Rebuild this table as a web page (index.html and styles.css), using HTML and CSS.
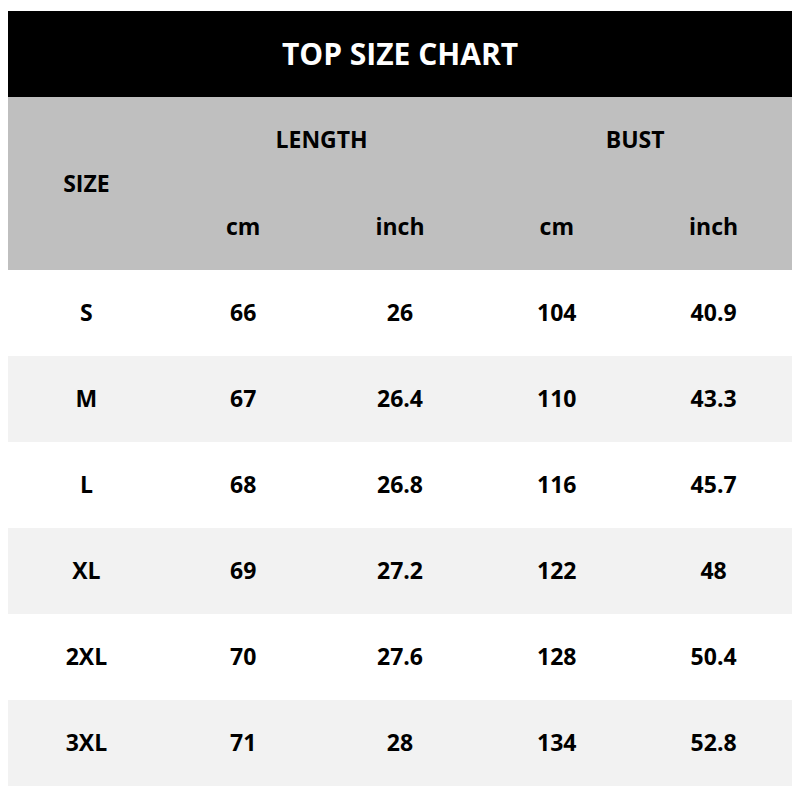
FILE: index.html
```html
<!DOCTYPE html>
<html>
<head>
<meta charset="utf-8">
<link rel="stylesheet" href="styles.css">
</head>
<body>
<div class="chart">
  <div class="title">TOP SIZE CHART</div>
  <div class="head">
    <div class="size-h">SIZE</div>
    <div class="group g1">LENGTH</div>
    <div class="group g2">BUST</div>
    <div class="unit">cm</div>
    <div class="unit">inch</div>
    <div class="unit">cm</div>
    <div class="unit">inch</div>
  </div>
  <div class="row"><div>S</div><div>66</div><div>26</div><div>104</div><div>40.9</div></div>
  <div class="row alt"><div>M</div><div>67</div><div>26.4</div><div>110</div><div>43.3</div></div>
  <div class="row"><div>L</div><div>68</div><div>26.8</div><div>116</div><div>45.7</div></div>
  <div class="row alt"><div>XL</div><div>69</div><div>27.2</div><div>122</div><div>48</div></div>
  <div class="row"><div>2XL</div><div>70</div><div>27.6</div><div>128</div><div>50.4</div></div>
  <div class="row alt"><div>3XL</div><div>71</div><div>28</div><div>134</div><div>52.8</div></div>
</div>
</body>
</html>
```
FILE: styles.css
```css
html, body { margin: 0; padding: 0; background: #fff; }
body { padding: 11px 8px 0 8px; font-family: "Open Sans", "Liberation Sans", sans-serif; font-weight: 700; color: #000; }
.chart { width: 784px; }
.title { background: #000; color: #fff; height: 86px; display: flex; align-items: center; justify-content: center; font-size: 30px; padding-bottom: 1px; box-sizing: border-box; }
.head { background: #bfbfbf; display: grid; grid-template-columns: repeat(5, 1fr); grid-template-rows: 86px 87px; font-size: 23px; }
.head > div { display: flex; align-items: center; justify-content: center; padding-bottom: 2px; }
.size-h { grid-row: 1 / 3; grid-column: 1; }
.g1 { grid-column: 2 / 4; }
.g2 { grid-column: 4 / 6; }
.row { display: grid; grid-template-columns: repeat(5, 1fr); height: 86px; font-size: 23px; }
.row > div { display: flex; align-items: center; justify-content: center; padding-bottom: 2px; }
.row.alt { background: #f2f2f2; }
```
